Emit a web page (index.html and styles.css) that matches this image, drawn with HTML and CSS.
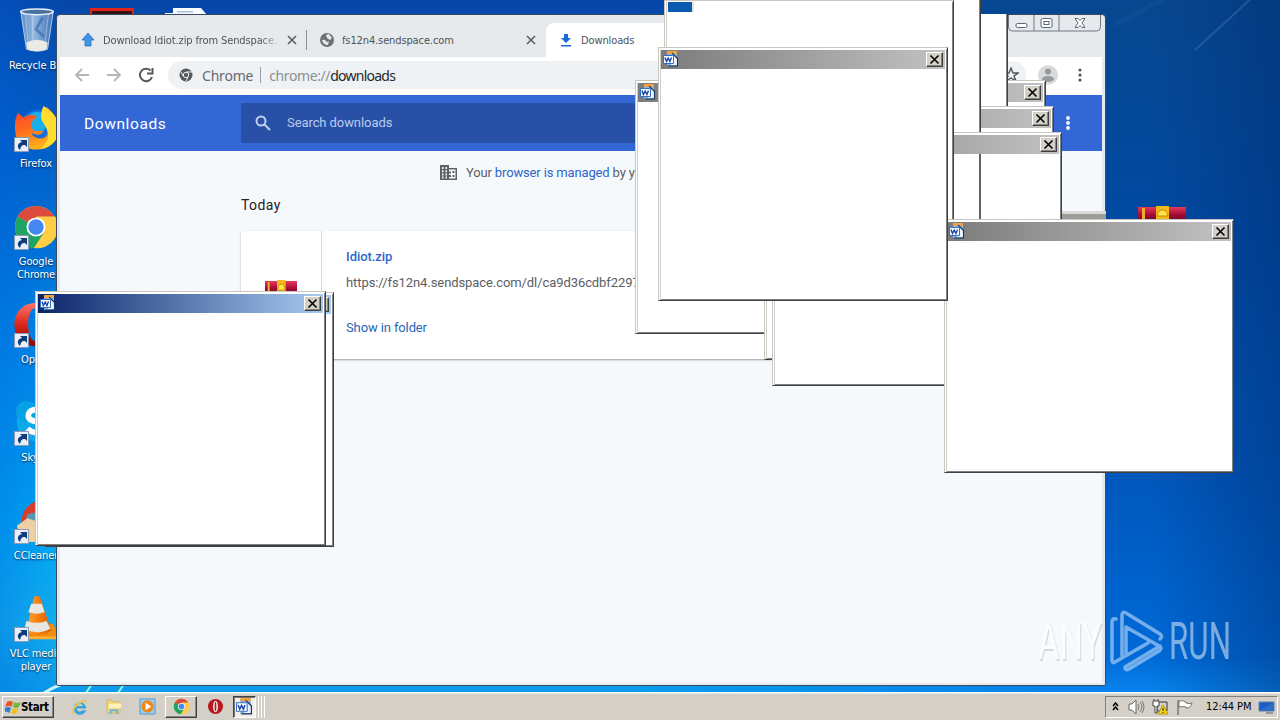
FILE: index.html
```html
<!DOCTYPE html>
<html lang="en">
<head>
<meta charset="utf-8">
<title>Desktop</title>
<link rel="stylesheet" href="styles.css">
</head>
<body>
<svg class="defs" width="0" height="0">
  <defs>
    <linearGradient id="cone" x2="1"><stop stop-color="#ffa52c"/><stop offset=".5" stop-color="#f57d0c"/><stop offset="1" stop-color="#dc5d00"/></linearGradient>
    <linearGradient id="fox" x1="0" y1="0" x2=".3" y2="1"><stop stop-color="#ff4032"/><stop offset=".55" stop-color="#ff6a1c"/><stop offset="1" stop-color="#ffb11b"/></linearGradient>
    <linearGradient id="glass" x2="1"><stop stop-color="#5d8cc4"/><stop offset=".4" stop-color="#94b8de"/><stop offset="1" stop-color="#3f70b4"/></linearGradient>
    <linearGradient id="book" x2="0" y2="1"><stop stop-color="#e83a5c"/><stop offset=".6" stop-color="#a80d35"/><stop offset="1" stop-color="#7c0830"/></linearGradient>
    <linearGradient id="red" x2="0" y2="1"><stop stop-color="#ff7768"/><stop offset=".5" stop-color="#d8261e"/><stop offset="1" stop-color="#8e0505"/></linearGradient>
  </defs>
  <symbol id="word" viewBox="0 0 16 16"><path d="M4 1h10v14H4z" fill="#86aede"/><path d="M4 0h10v3H4z" fill="#f0a34a"/><path d="M9 3l5 4v7H8z" fill="#e9f3ff"/><path d="M9 2l6 6M14.500 7v8H5" fill="none" stroke="#16365e" stroke-width="1.1"/><path d="M.5 4.500h10v8H.5z" fill="#fff" stroke="#3470c4"/><path d="M2 6.500l1.500 4L5.200 7l1.700 3.500L8.500 6.500" fill="none" stroke="#1746a6" stroke-width="1.400"/></symbol>
  <symbol id="arrow" viewBox="0 0 15 15"><path d="M.5.5h14v14H.5z" fill="#e7effa" stroke="#8a9bb5"/><path d="M6 13C2 9 4 6 8 5L6 3h7v7l-2-2c-4 0-4 2-5 5z" fill="#103c7c"/></symbol>
  <symbol id="chrome" viewBox="0 0 48 48"><circle cx="24" cy="24" r="22" fill="#fbc93b"/><path d="M24 24L4.900 13A22 22 0 0 1 43 13z" fill="#dd4b3e"/><path d="M5 13a22 22 0 0 0 17 33l11-17-9-5z" fill="#1fa463"/><path d="M24 13h20a22 22 0 0 1-22 33l11-17z" fill="#ffcd46"/><circle cx="24" cy="24" r="10" fill="#fff"/><circle cx="24" cy="24" r="8" fill="#4688f1"/></symbol>
  <symbol id="rar" viewBox="0 0 48 13" preserveAspectRatio="none"><path d="M0 1h48v12H0z" fill="url(#book)"/><path d="M4 2h3v11H4z" fill="#edac29"/><path d="M18 0h13v13H18z" fill="#f2b91c"/><path d="M19 10q1-6 5.500-6t5.500 6z" fill="#ffe34e" stroke="#c98a00"/></symbol>
  <symbol id="close" viewBox="0 0 15 13"><path d="M3.500 2.500l8 8M11.500 2.500l-8 8" stroke="#000" stroke-width="1.600"/></symbol>
</svg>

<main class="desktop">
  <svg class="rays" viewBox="0 0 1280 720">
    <path d="M1195 50L1255-5" stroke="#6fa0cf" stroke-width="2" opacity=".25"/><path d="M1115 25L1170-5" stroke="#6fa0cf" stroke-width="5" opacity=".06"/>
    <path d="M44 693q8-5 18-9" stroke="#c9f1ff" stroke-width="3" fill="none"/><path d="M86 693l6-9M118 693l6-9" stroke="#a5f3ea" stroke-width="2"/>
    <path d="M90 8h44v8H90z" fill="#e2231a"/><path d="M92 11h40v5H92z" fill="#301417"/>
    <path d="M173 8h28l6 7h-34zM165 13h10v2h-10z" fill="#f8fbff"/><path d="M177 11h16v1.500h-16z" fill="#a9bfdc"/>
  </svg>

  <section class="shortcuts">
    <div class="shortcut"><svg viewBox="0 0 48 48"><path d="M7 3h34l-6 40q-11 4-22 0z" fill="url(#glass)" stroke="#b9d0e6"/><path d="M12 6l3 34M36 6l-4 34M19 7l1 32" stroke="#d6e6f7" opacity=".5"/><path d="M30 10l-7 12 8 8" fill="none" stroke="#2d62ad" stroke-width="3" opacity=".6"/><path d="M13 36q11-6 22 0l-1 7q-10 4-20 0z" fill="#eceae6"/><ellipse cx="24" cy="4" rx="17" ry="3" fill="#496f9e" stroke="#e4eef7" stroke-width="1.500"/></svg><span>Recycle Bin</span></div>
    <div class="shortcut"><svg viewBox="0 0 48 48"><circle cx="26" cy="23" r="19" fill="#136fe0"/><circle cx="25" cy="17" r="11" fill="#1aaeea"/><path d="M5 7l6 5q7-5 14-1l-5 5q-4 6 3 10h9q-4 7-13 2 2 6 11 6c9-2 9-14 4-20-4-5-1-10 2-13 7 8 13 14 12 25-3 24-38 26-45 5C1 21 2 14 5 7z" fill="url(#fox)"/><path d="M32 0c9 5 16 14 16 24 0 10-8 20-20 21 12-9 10-19 2-30q-2-8 2-15z" fill="#ffdc2e"/></svg><svg class="badge"><use href="#arrow"/></svg><span>Firefox</span></div>
    <div class="shortcut"><svg><use href="#chrome"/></svg><svg class="badge"><use href="#arrow"/></svg><span>Google Chrome</span></div>
    <div class="shortcut"><svg viewBox="0 0 48 48"><path fill-rule="evenodd" d="M24 1c30 0 30 45 0 45S-6 1 24 1zm0 5c-11 0-11 35 0 35s11-35 0-35z" fill="url(#red)"/></svg><svg class="badge"><use href="#arrow"/></svg><span>Opera</span></div>
    <div class="shortcut"><svg viewBox="0 0 48 48"><circle cx="24" cy="23" r="20" fill="#0caae9"/><circle cx="14" cy="12" r="11" fill="#07a1e5"/><path d="M32 14c-6-7-17-4-16 3 1 8 17 3 17 11 0 7-12 8-18 2" fill="none" stroke="#fff" stroke-width="6"/></svg><svg class="badge"><use href="#arrow"/></svg><span>Skype</span></div>
    <div class="shortcut"><svg viewBox="0 0 48 48"><path d="M9 27Q8 8 28 2v35z" fill="#d93b2e"/><path d="M15 17l12-3v15H12z" fill="#519bb6"/><path d="M4 29l11-8 15 5v20H9z" fill="#edcfa1"/></svg><svg class="badge"><use href="#arrow"/></svg><span>CCleaner</span></div>
    <div class="shortcut"><svg viewBox="0 0 48 48"><path d="M14 29h28l6 15H8z" fill="#f28a0a"/><path d="M8 42h40v3H8z" fill="#ffad2c"/><path d="M22 1q3-3 6 0l12 35q-13 8-26 0z" fill="url(#cone)"/><path d="M19 8h11l3 9q-8 3-17 0zM14 26q11 4 21 0l4 8q-13 8-27 0z" fill="#e8e6e3"/></svg><svg class="badge"><use href="#arrow"/></svg><span>VLC media player</span></div>
  </section>
  <svg class="archive-shortcut"><use href="#rar"/></svg>

  <section class="browser">
    <div class="tabstrip">
      <div class="tab first"><svg viewBox="0 0 14 14"><path d="M7 0l6 7h-3v6H4V7H1z" fill="#3f95e5" stroke="#2167b8" stroke-width=".7"/></svg><span class="label fade">Download Idiot.zip from Sendspace.</span><svg class="x" viewBox="0 0 10 10"><path d="M1 1l8 8M9 1l-8 8"/></svg></div>
      <div class="tab second"><svg viewBox="0 0 14 14"><circle cx="7" cy="7" r="7" fill="#6d7174"/><path d="M2 7q3-1 4 1t3 0l-1 4q-5 0-6-5zM6 2l3-1 3 4-2 2-3-2z" fill="#e5e9eb"/></svg><span class="label">fs12n4.sendspace.com</span><svg class="x" viewBox="0 0 10 10"><path d="M1 1l8 8M9 1l-8 8"/></svg></div>
      <div class="tab active"><svg viewBox="0 0 14 14"><path d="M5 1h4v4h3L7 10 2 5h3zM2 12h10v1.600H2z" fill="#1769e0"/></svg><span class="label">Downloads</span></div>
      <div class="caption"><svg viewBox="0 0 93 17"><path d="M.5 0v12q0 4 4 4h84q4 0 4-4V0M26 0v16M51 0v16" fill="none" stroke="#6d7784"/><g fill="#fff" stroke="#596674"><rect x="8" y="8.500" width="11" height="4" rx="1.500"/><rect x="33" y="3.500" width="11" height="9" rx="1.500"/><rect x="36" y="6.500" width="5" height="3"/><path d="M67 3.500h3l2 2 2-2h3l-3 4.500 3 4.500h-3l-2-2-2 2h-3l3-4.500z"/></g></svg></div>
    </div>
    <div class="toolbar">
      <svg class="nav" viewBox="0 0 16 16"><path d="M15 8H2M8 2L2 8l6 6"/></svg>
      <svg class="nav" viewBox="0 0 16 16"><path d="M1 8h13M8 2l6 6-6 6"/></svg>
      <svg class="nav dark" viewBox="0 0 16 16"><path d="M14 10a6.200 6.200 0 1 1-1.500-6.500M14.500 1v5.500H9"/></svg>
      <div class="omnibox"><svg viewBox="0 0 14 14"><circle cx="7" cy="7" r="6.500" fill="#555a5e"/><circle cx="7" cy="7" r="2.700" fill="#555a5e" stroke="#eef1f4"/><path d="M7 4h6M4.500 8.500L2 4M9 9l-2 4" stroke="#eef1f4"/></svg><span class="site">Chrome</span><i></i><span class="scheme">chrome://<b>downloads</b></span><svg class="star" viewBox="0 0 16 16"><path d="M8 1l2 5h5l-4 3 2 5-5-3-5 3 2-5-4-3h5z" fill="none" stroke="#555" stroke-width="1.400"/></svg></div>
      <svg class="avatar" viewBox="0 0 20 20"><circle cx="10" cy="10" r="10" fill="#d9dadc"/><circle cx="10" cy="6.500" r="3" fill="#98999b"/><ellipse cx="10" cy="14" rx="6" ry="3" fill="#98999b"/></svg>
      <svg class="dots" viewBox="0 0 4 14"><circle cx="2" cy="2" r="1.600"/><circle cx="2" cy="7" r="1.600"/><circle cx="2" cy="12" r="1.600"/></svg>
    </div>
    <header class="page-head"><h1>Downloads</h1><div class="search"><svg viewBox="0 0 16 16"><circle cx="6" cy="6" r="4.500"/><path d="M9.500 9.500l5.500 5.500"/></svg><span>Search downloads</span></div><svg class="dots" viewBox="0 0 4 14"><circle cx="2" cy="2" r="1.900"/><circle cx="2" cy="7" r="1.900"/><circle cx="2" cy="12" r="1.900"/></svg></header>
    <div class="page">
      <p class="managed"><svg viewBox="0 0 17 15"><path fill-rule="evenodd" d="M0 0h9v3h8v12H0zM2 2v2h1.500V2zm3.500 0v2H7V2zM2 5.200v2h1.500v-2zm3.500 0v2H7v-2zM2 8.400v2h1.500v-2zm3.500 0v2H7v-2zM2 11.600v2h1.500v-2zm3.500 0v2H7v-2zM9 4.500v2h2v2H9v1.500h2v2H9v1.500h6.500v-9zM12.500 6h2v2h-2zm0 4h2v2h-2z" fill="#5f6368"/></svg><span>Your <a>browser is managed</a> by your organization</span></p>
      <h2>Today</h2>
      <article class="card"><div class="thumb"><svg><use href="#rar"/></svg></div><div class="detail"><a class="file">Idiot.zip</a><span class="url">https://fs12n4.sendspace.com/dl/ca9d36cdbf2297</span><a class="show">Show in folder</a></div></article>
    </div>
  </section>

  <div class="patch title-scrap"></div>
  <div class="win w-back1"><div class="bar"><button><svg><use href="#close"/></svg></button></div></div>
  <div class="win w-a"><div class="bar"><svg class="ico"><use href="#word"/></svg></div></div>
  <div class="patch strip-a"></div>
  <div class="win w-back2"><div class="bar"><button><svg><use href="#close"/></svg></button></div></div>
  <div class="patch strip-b"></div>
  <div class="win w-back3"><div class="bar"><button><svg><use href="#close"/></svg></button></div></div>
  <div class="patch line-b"></div>
  <div class="win w-top"><div class="hole"></div></div>
  <div class="win w-right"><div class="bar"><svg class="ico"><use href="#word"/></svg><button><svg><use href="#close"/></svg></button></div></div>
  <div class="win w-main"><div class="bar"><svg class="ico"><use href="#word"/></svg><button><svg><use href="#close"/></svg></button></div></div>
  <div class="win w-left2"><div class="bar focus"><button></button></div></div>
  <div class="win w-left"><div class="bar focus"><svg class="ico"><use href="#word"/></svg><button><svg><use href="#close"/></svg></button></div></div>

  <svg class="watermark" viewBox="0 0 200 70">
    <text class="shade" x="5" y="53" textLength="64" lengthAdjust="spacingAndGlyphs">ANY</text>
    <text class="any" x="4" y="51" textLength="64" lengthAdjust="spacingAndGlyphs">ANY</text>
    <text x="135" y="51" textLength="62" lengthAdjust="spacingAndGlyphs">RUN</text>
    <path d="M82 11q-4-1-4 3v38q0 4 3 2l33-19M88 48V7q0-4 4-2l34 21q3 2 0 5M92 21v25M92 19l33 19q4 2 0 5l-30 18q-4 2-4-2l35-21"/>
  </svg>
</main>

<footer class="taskbar">
  <div class="start"><svg viewBox="0 0 16 16"><path d="M2 3q3-2 6 0L6.500 8Q4 6 0 8z" fill="#e85423"/><path d="M9 3q3 2 7 0l-2 5q-3 2-6 0z" fill="#75b63b"/><path d="M0 9q3-2 6 0l-1.500 5Q2 12-1 13z" fill="#2d7fd3"/><path d="M7.500 9q3 2 6 0L12 14q-3 2-6 0z" fill="#f5bd20"/></svg><b>Start</b></div>
  <div class="launch">
    <div class="slot"><svg viewBox="0 0 18 18"><path d="M16 11H6q1 4 4 3l3-1h3c-2 7-13 6-13-2S15 2 16 11zM6 8.500h7Q10 4 6 8.500z" fill="#37a4dc" fill-rule="evenodd"/><path d="M1 15C1 8 12 0 16 3c1 1 0 3-1 4 1-5-4-2-8 1-4 4-7 9-2 7-2 2-4 2-4 0z" fill="#e8c653"/></svg></div>
    <div class="slot"><svg viewBox="0 0 18 18"><path d="M2 2h5l1 2h8v12H2z" fill="#eed579" stroke="#c9a84b" stroke-width=".6"/><path d="M4 6h13v5H4z" fill="#fff2b7"/><path d="M5 12h9v5h-2v-3H7v3H5z" fill="#68b4dd"/></svg></div>
    <div class="slot"><svg viewBox="0 0 18 18"><path d="M1 1h16v16H1z" fill="#9dcdf0" stroke="#4e9ad1"/><circle cx="9" cy="9" r="6.500" fill="#ee8817"/><path d="M7 5l6 4-6 4z" fill="#fff"/></svg></div>
    <div class="slot raised"><svg><use href="#chrome"/></svg></div>
    <div class="slot"><svg viewBox="0 0 18 18"><circle cx="9" cy="9" r="8" fill="#b61920"/><ellipse cx="9" cy="9" rx="2.500" ry="6" fill="#fff"/><ellipse cx="9" cy="9" rx="1" ry="5" fill="#a9201f"/></svg></div>
    <div class="slot pressed"><svg><use href="#word"/></svg></div><i></i><i></i><i></i>
  </div>
  <div class="tray">
    <svg class="chev" viewBox="0 0 7 9"><path d="M1 4l2.500-3L6 4M1 8l2.500-3L6 8" fill="none" stroke="#000" stroke-width="1.500"/></svg>
    <svg class="tray-icon" viewBox="0 0 17 16"><path d="M1 5h3l4-4v14l-4-4H1z" fill="#fff" stroke="#666"/><path d="M10 5q2 3 0 6M12 3q4 5 0 10M14 2q4 6 0 12" fill="none" stroke="#777"/></svg>
    <svg class="tray-icon" viewBox="0 0 17 16"><path d="M5 3h10v9H5z" fill="#d2d1cb" stroke="#333"/><path d="M1 2h6v5H5v7H3V7H1zM2 0v2M6 0v2" fill="#fff" stroke="#444"/><path d="M11 6l5 9H6z" fill="#f5d319" stroke="#c19c08"/><path d="M11 9v3M11 13v1" stroke="#111"/></svg>
    <svg class="tray-icon" viewBox="0 0 17 16"><path d="M2 1v15" stroke="#777" stroke-width="1.500"/><path d="M3 2q4-1 7 1v1q3 1 6 0-1 5-6 5V8q-3-1-7 0z" fill="#fff" stroke="#777"/></svg>
    <time>12:44 PM</time>
    <svg class="tray-icon" viewBox="0 0 17 16"><path d="M1 3h15v9H1z" fill="#1a5cc1" stroke="#5d80a9"/><path d="M2 11L15 4v7z" fill="#2c6fca"/><path d="M8 14h7" stroke="#7a8796" stroke-width="1.500"/></svg>
  </div>
</footer>
</body>
</html>
```

FILE: styles.css
```css
* { box-sizing: border-box; }
body { margin: 0; width: 1280px; height: 720px; overflow: hidden; display: flex; flex-direction: column; font: 11px "DejaVu Sans Condensed", "DejaVu Sans", sans-serif; }
svg { display: block; flex: none; }
.defs { position: absolute; }
h1, h2, p { margin: 0; font-weight: normal; }

.desktop { position: relative; flex: none; height: 692px; overflow: hidden; background:
  linear-gradient(90deg, rgba(0,95,220,.35), transparent 5%),
  linear-gradient(180deg, #0647a8 0, #0060c8 22%, #0088e6 50%, #00a8f4 76%, #12b2ef 90%, #0a9ceb 100%); }
.desktop::before { content: ""; position: absolute; left: 640px; top: 0; width: 640px; height: 692px; background: linear-gradient(90deg, transparent 80%, rgba(0,40,105,.4)), linear-gradient(#07478f, #004aa4 35%, #0058bd 70%, #006ad8 95%, #0783ec); -webkit-mask: linear-gradient(90deg, transparent, #000 65%); mask: linear-gradient(90deg, transparent, #000 65%); }
.rays { position: absolute; left: 0; top: 0; width: 1280px; height: 720px; }
.shortcuts { position: relative; width: 72px; padding-top: 8px; }
.shortcut { position: relative; height: 98px; display: flex; flex-direction: column; align-items: center; color: #fff; text-align: center; line-height: 13px; letter-spacing: -.1px; text-shadow: 0 1px 2px #024; }
.shortcut > svg:first-child { width: 46px; height: 46px; margin-bottom: 5px; }
.shortcut:first-child { padding-left: 2px; }
.shortcut span { white-space: nowrap; }
.shortcut:nth-child(3) span, .shortcut:nth-child(7) span { white-space: normal; width: 62px; }
.shortcut .badge { position: absolute; left: 14px; top: 31px; width: 15px; height: 15px; }
.archive-shortcut { position: absolute; left: 1138px; top: 206px; width: 48px; height: 13px; }

.browser { position: absolute; left: 56px; top: 14px; width: 1050px; height: 672px; border: 1px solid #3a4a60; border-radius: 4px 4px 2px 2px; padding: 0 3px 2px; background: #e7eaed; display: flex; flex-direction: column; overflow: hidden; }
.tabstrip { height: 42px; display: flex; align-items: flex-end; position: relative; color: #4e5357; }
.tab { height: 34px; display: flex; align-items: center; }
.tab > svg:first-child { width: 14px; height: 14px; margin-right: 8px; }
.tab.first { width: 247px; padding: 0 9px 0 21px; border-right: 1px solid #8b8f93; height: 20px; margin-bottom: 7px; }
.tab.second { width: 239px; padding: 0 10px 0 13px; }
.tab.active { width: 240px; background: #fff; border-radius: 8px 8px 0 0; padding-left: 13px; }
.label { flex: 1; white-space: nowrap; overflow: hidden; letter-spacing: -.12px; }
.fade { -webkit-mask: linear-gradient(90deg, #000 85%, transparent 98%); mask: linear-gradient(90deg, #000 85%, transparent 98%); }
.x { width: 10px; height: 10px; stroke: #5c6165; stroke-width: 1.7; }
.caption { position: absolute; right: 1px; top: 0; width: 93px; height: 17px; }
.toolbar { height: 38px; background: #fff; display: flex; align-items: center; padding: 0 20px 2px 14px; }
.nav { width: 16px; height: 16px; margin-right: 16px; fill: none; stroke: #b3b5b8; stroke-width: 1.8; }
.nav.dark { stroke: #55595e; stroke-width: 2; margin-right: 14px; }
.omnibox { flex: 1; height: 28px; border-radius: 14px; background: #eff2f5; display: flex; align-items: center; padding: 0 7px 0 11px; font: 14px "Noto Sans", sans-serif; letter-spacing: -.4px; color: #65696d; }
.omnibox > svg:first-child { width: 14px; height: 14px; margin-right: 9px; }
.site { letter-spacing: -.2px; }
.omnibox i { width: 1px; height: 16px; background: #999ca0; margin: 0 8px 0 7px; }
.scheme { color: #8b8f93; flex: 1; }
.scheme b { color: #26292c; font-weight: normal; letter-spacing: -.75px; }
.star { width: 16px; height: 16px; }
.avatar { width: 20px; height: 20px; margin-left: 12px; }
.dots { width: 4px; height: 14px; fill: #555; margin-left: 20px; }
.page-head { height: 56px; background: #3367d6; color: #fff; display: flex; align-items: center; padding: 0 32px 0 24px; font-family: Roboto, sans-serif; }
.page-head h1 { font-size: 15.5px; width: 157px; letter-spacing: .6px; padding-top: 1px; }
.search { width: 680px; height: 40px; background: #2850a7; border-radius: 2px; display: flex; align-items: center; padding: 0 0 1px 14px; gap: 16px; font-size: 13px; letter-spacing: -.08px; color: #b9cbed; }
.search svg { width: 16px; height: 16px; fill: none; stroke: #c3d1ed; stroke-width: 2; }
.page-head .dots { fill: #fff; margin-left: auto; }
.page { flex: 1; background: #f6f9fc; font: 13px Roboto, sans-serif; padding: 13px 0 0 181px; color: #5a5e63; }
.page a { color: #2e65ca; }
.managed { height: 16px; padding-left: 199px; display: flex; align-items: center; gap: 9px; white-space: nowrap; letter-spacing: -.15px; }
.managed svg { width: 17px; height: 15px; }
.page h2 { color: #202124; font-size: 14px; line-height: 18px; margin-top: 16px; letter-spacing: .4px; }
.card { width: 680px; height: 128px; margin-top: 17px; background: #fff; border-radius: 2px; box-shadow: 0 1px 2px #9a9ea3; display: flex; }
.thumb { width: 81px; border-right: 1px solid #d8dadd; padding: 49px 0 0 24px; }
.thumb svg { width: 32px; height: 13px; }
.detail { padding: 17px 0 0 24px; display: flex; flex-direction: column; line-height: 18px; }
.detail .file { font-weight: 500; letter-spacing: -.05px; }
.url { margin-top: 8px; letter-spacing: -.08px; }
.page .show { margin-top: 27px; color: #2767bb; letter-spacing: -.12px; }

.win { position: absolute; width: 289px; height: 253px; background: #fff; border: 1px solid #c9c6c0; border-right-color: #404040; border-bottom-color: #404040; box-shadow: inset 1px 1px #fff, inset 2px 0 #d0cec9, inset -1px -1px #808080; padding: 2px 2px 0; }
.bar { height: 19px; background: linear-gradient(90deg, #7c7c7c, #c2c2c2); display: flex; align-items: center; padding: 0 2px 1px; }
.bar.focus { background: linear-gradient(90deg, #0a246a, #a6caf0); }
.ico { width: 16px; height: 16px; }
.bar button { margin: 0 0 0 auto; padding: 0; width: 17px; height: 15px; border: 1px solid #fff; border-right-color: #404040; border-bottom-color: #404040; background: #d4d0c8; box-shadow: inset -1px -1px #888580; }
.bar button svg { width: 15px; height: 13px; }
.w-a { left: 635px; top: 80px; height: 254px; }
.w-back1 { left: 757px; top: 80px; }
.w-back2 { left: 764px; top: 106px; height: 254px; width: 290px; }
.w-back3 { left: 772px; top: 132px; height: 254px; width: 290px; }
.w-top { left: 664px; top: 0; width: 290px; height: 224px; padding: 0 0 0 3px; }
.hole { width: 26px; height: 12px; background: #0a5bb0; border: solid #fff; border-width: 1px 2px 1px 0; border-right-color: #e4e4e4; }
.w-main { left: 658px; top: 47px; width: 290px; height: 254px; }
.w-right { left: 944px; top: 219px; width: 290px; height: 254px; }
.w-left { left: 35px; top: 291px; width: 291px; height: 255px; }
.w-left2 { left: 44px; top: 292px; width: 290px; height: 255px; }
.patch { position: absolute; background: #fff; }
.title-scrap { left: 1061px; top: 211px; width: 45px; height: 10px; background: #9b9d98; border-top: 3px solid #dbdad4; }
.strip-a { left: 960px; top: 14px; width: 48px; height: 92px; border-right: 1px solid #404040; box-shadow: inset -1px 0 #808080; }
.strip-b { left: 940px; top: 0; width: 41px; height: 224px; border-right: 1px solid #404040; box-shadow: inset -1px 0 #808080; }
.line-b { left: 979px; top: 154px; width: 2px; height: 66px; background: #606060; }
.watermark { position: absolute; left: 1034px; top: 608px; width: 200px; height: 70px; opacity: .62; overflow: visible; }
.watermark text { font: 400 51px Roboto, sans-serif; fill: #c9def4; }
.watermark .any { fill: #fff; }
.watermark .shade { fill: #9fa4a8; opacity: .6; }
.watermark path { fill: none; stroke: #bddaf8; stroke-width: 3.5; stroke-linecap: round; stroke-linejoin: round; }

.taskbar { height: 28px; flex: none; background: #d4d0c8; border-top: 1px solid #fff; display: flex; align-items: center; padding: 0 2px; box-shadow: inset 0 1px #e8e6e1; }
.start { width: 52px; height: 22px; border: 1px solid #fff; border-right-color: #404040; border-bottom-color: #404040; box-shadow: inset -1px -1px #888; display: flex; align-items: center; padding-left: 2px; font-size: 11.5px; color: #000; letter-spacing: -.35px; }
.start svg { width: 16px; height: 16px; }
.launch { display: flex; margin-left: 9px; height: 22px; gap: 2px; }
.slot { width: 32px; display: flex; align-items: center; justify-content: center; }
.slot svg { width: 17px; height: 17px; }
.raised { border: 1px solid #fff; border-right-color: #404040; border-bottom-color: #404040; box-shadow: inset -1px -1px #888; }
.pressed { width: 23px; border: 1px solid #404040; border-color: #404040 #fff #fff #404040; background: #f1efeb; box-shadow: inset 1px 1px #777; }
.launch i { width: 1px; background: #fff; }
.tray { margin-left: auto; width: 173px; height: 22px; border: 1px solid #808080; border-right-color: #fff; border-bottom-color: #fff; display: flex; align-items: center; padding: 0 2px 0 6px; }
.chev { width: 7px; height: 9px; margin-right: 9px; }
.tray-icon { width: 17px; height: 16px; margin-right: 7px; }
.tray time { margin-left: 6px; width: 52px; white-space: nowrap; letter-spacing: -.1px; }
.tray .tray-icon:last-child { margin: 0; }
```
